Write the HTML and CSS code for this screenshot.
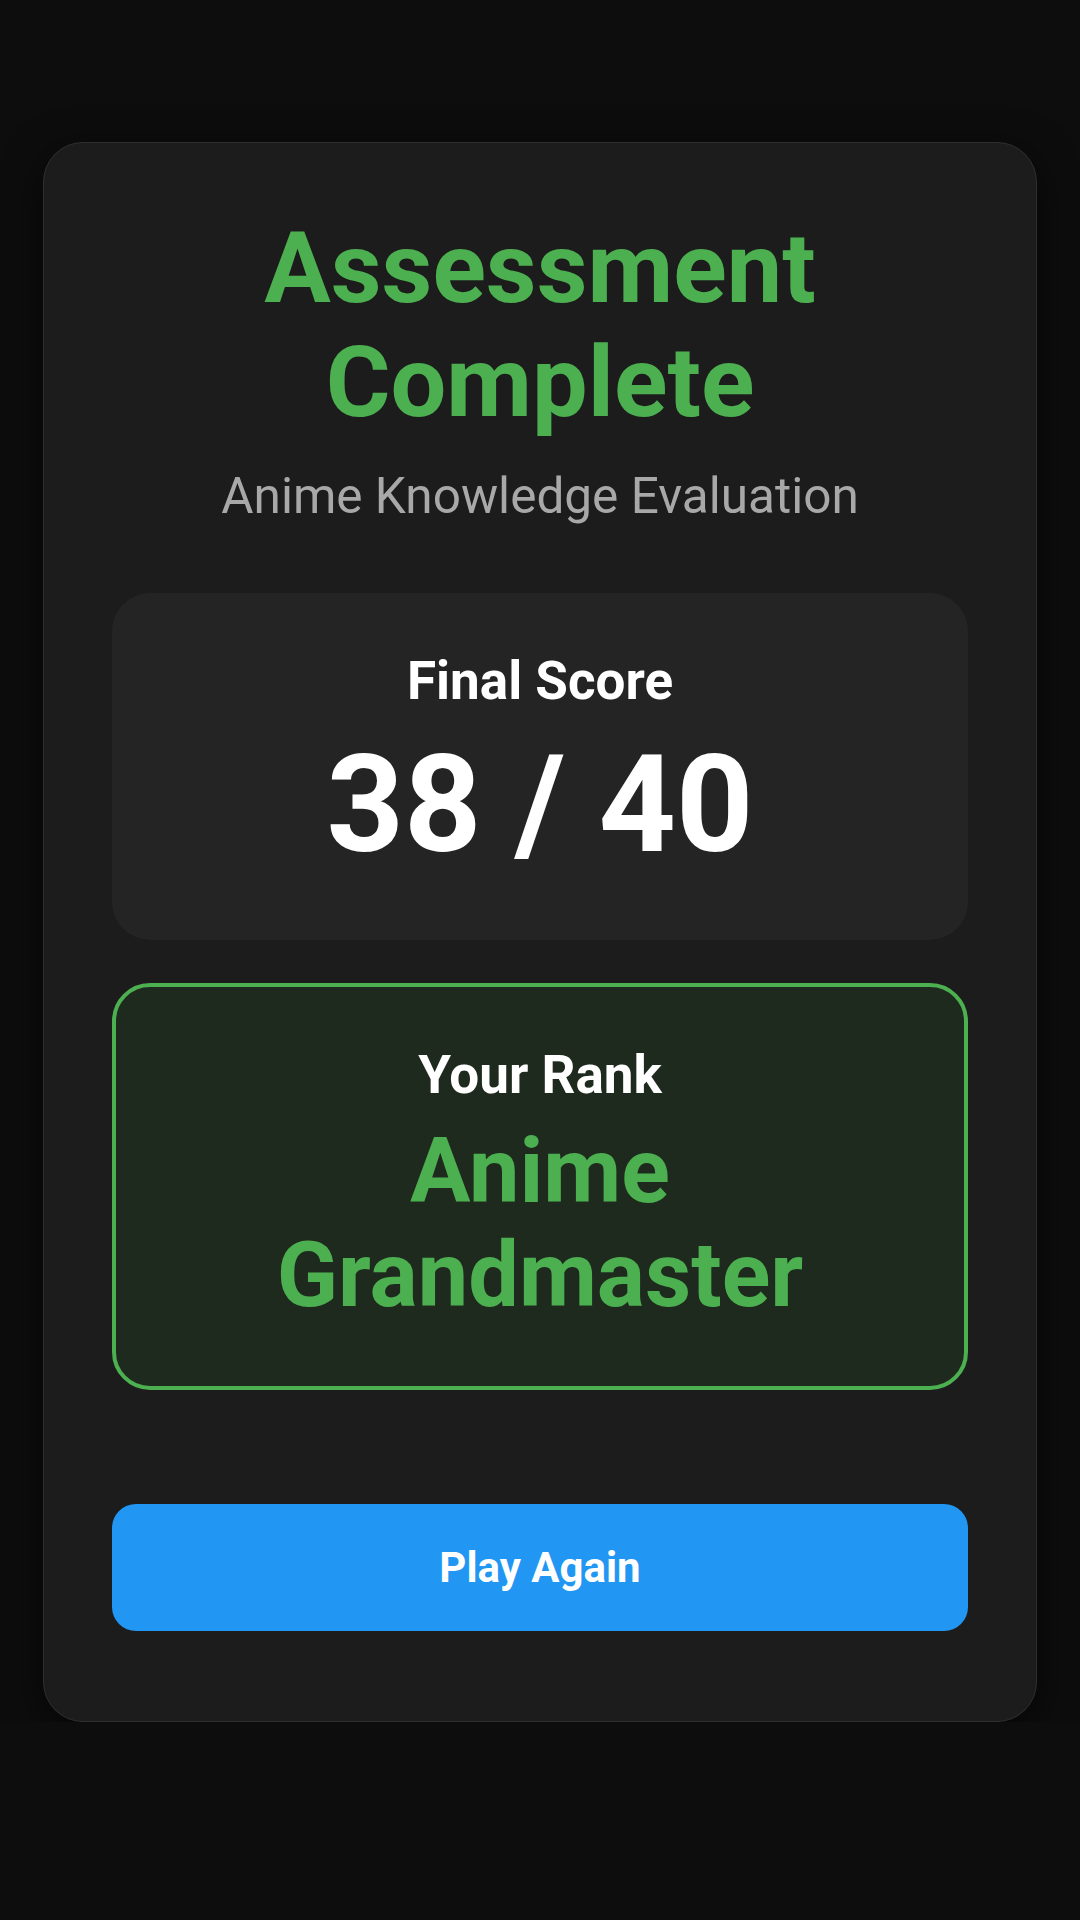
FILE: index.html
```html
<!DOCTYPE html>
<html lang="en">
<head>
    <meta charset="UTF-8">
    <title>Assessment Complete</title>
    <link rel="stylesheet" href="styles.css">
</head>
<body>

    <div id="results-card">
        <div class="results-header">
            <h1 class="results-title">Assessment Complete</h1>
            <p class="results-subtitle">Anime Knowledge Evaluation</p>
        </div>

        <div class="score-box">
            <div class="box-label">Final Score</div>
            <div class="score-value">38 / 40</div>
        </div>

        <div class="rank-box">
            <div class="box-label">Your Rank</div>
            <div class="rank-value">Anime Grandmaster</div>
        </div>

        <button id="play-again" type="button">Play Again</button>
    </div>

</body>
</html>
```

FILE: styles.css
```css
html, body {
    margin: 0;
    background: #0d0d0d;
}
body {
    padding: 142px 43px 0;
    font-family: Roboto, "Liberation Sans", sans-serif;
    color: #fff;
}
#results-card {
    background: #1c1c1c;
    border: 1px solid #2f2f2f;
    border-radius: 40px;
    padding: 68px 68px 90px;
    box-shadow: 0 10px 40px rgba(0, 0, 0, .6);
    text-align: center;
}
.results-header {
    margin-bottom: 68px;
}
.results-title {
    margin: 0 0 28px;
    font-size: 99px;
    line-height: 114px;
    font-weight: 700;
    color: #4caf50;
}
.results-subtitle {
    margin: 0;
    font-size: 49.5px;
    line-height: 58px;
    color: #a8a8a8;
}
.box-label {
    font-size: 53px;
    line-height: 65px;
    font-weight: 700;
}
.score-box {
    background: #242424;
    border-radius: 38px;
    padding: 56px 40px 52px;
    margin-bottom: 43px;
}
.score-value {
    margin-top: 8px;
    font-size: 135px;
    line-height: 166px;
    font-weight: 700;
}
.rank-box {
    background: #1f2a1f;
    border: 4px solid #4caf50;
    border-radius: 38px;
    padding: 56px 40px 58px;
}
.rank-value {
    margin-top: 12px;
    font-size: 90px;
    line-height: 104px;
    font-weight: 700;
    color: #4caf50;
}
#play-again {
    display: block;
    width: 100%;
    height: 127px;
    margin-top: 114px;
    border: 0;
    border-radius: 24px;
    background: #2196f3;
    color: #fff;
    font-family: inherit;
    font-size: 42px;
    font-weight: 700;
}
```
